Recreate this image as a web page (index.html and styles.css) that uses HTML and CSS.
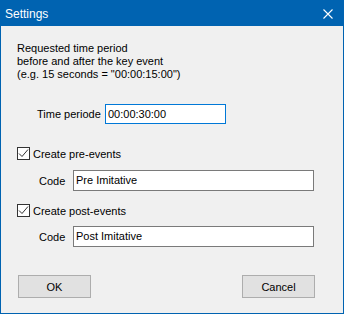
FILE: index.html
```html
<!DOCTYPE html>
<html lang="en">
<head>
    <meta charset="UTF-8">
    <title>Settings</title>
    <link rel="stylesheet" href="styles.css">
</head>
<body>
    <div class="window">
        <div class="titlebar">
            <span class="title">Settings</span>
            <span class="close">
                <svg width="10" height="10" viewBox="0 0 10 10">
                    <path d="M0.5 0.5 L9.5 9.5 M9.5 0.5 L0.5 9.5" stroke="#fff" stroke-width="1.1" fill="none"/>
                </svg>
            </span>
        </div>

        <div class="content">
            <p class="intro">
                Requested time period<br>
                before and after the key event<br>
                (e.g. 15 seconds = "00:00:15:00")
            </p>

            <div class="field-row time-row">
                <label class="time-label">Time periode</label>
                <div class="textbox focused">00:00:30:00</div>
            </div>

            <div class="check-row pre-check">
                <span class="checkbox">
                    <svg width="11" height="11" viewBox="0 0 11 11">
                        <path d="M1 5.5 L4 8.5 L10 1.5" stroke="#333" stroke-width="1" fill="none"/>
                    </svg>
                </span>
                <span>Create pre-events</span>
            </div>

            <div class="field-row code-row">
                <label class="code-label">Code</label>
                <div class="textbox wide">Pre Imitative</div>
            </div>

            <div class="check-row post-check">
                <span class="checkbox">
                    <svg width="11" height="11" viewBox="0 0 11 11">
                        <path d="M1 5.5 L4 8.5 L10 1.5" stroke="#333" stroke-width="1" fill="none"/>
                    </svg>
                </span>
                <span>Create post-events</span>
            </div>

            <div class="field-row code-row post-code">
                <label class="code-label">Code</label>
                <div class="textbox wide">Post Imitative</div>
            </div>

            <div class="buttons">
                <button class="btn">OK</button>
                <button class="btn">Cancel</button>
            </div>
        </div>
    </div>
</body>
</html>
```

FILE: styles.css
```css
* {
    margin: 0;
    padding: 0;
    box-sizing: border-box;
}

body {
    font-family: 'Liberation Sans', Arial, sans-serif;
    font-size: 11px;
    color: #000;
    background: #f0f0f0;
}

.window {
    width: 344px;
    height: 314px;
    border: 1px solid #0063b1;
    background: #f0f0f0;
    display: flex;
    flex-direction: column;
}

.titlebar {
    height: 25px;
    background: #0063b1;
    display: flex;
    align-items: center;
    justify-content: space-between;
    padding: 0 10px 0 4px;
}

.title {
    color: #fff;
    font-size: 12px;
    margin-top: 1px;
}

.close {
    display: flex;
    margin-top: 1px;
}

.content {
    padding: 16px 16px 0 16px;
    display: flex;
    flex-direction: column;
}

.intro {
    line-height: 13px;
}

.field-row {
    display: flex;
    align-items: center;
}

.time-row {
    margin-top: 23px;
    padding-left: 20px;
}

.time-label {
    width: 68px;
}

.code-row {
    margin-top: 10px;
    padding-left: 22px;
}

.post-code {
    margin-top: 9px;
}

.code-label {
    width: 34px;
}

.textbox {
    background: #fff;
    border: 1px solid #7a7a7a;
    height: 21px;
    line-height: 19px;
    padding-left: 2px;
}

.textbox.focused {
    border-color: #0078d7;
    width: 121px;
    height: 20px;
    line-height: 18px;
}

.textbox.wide {
    width: 241px;
}

.check-row {
    display: flex;
    align-items: center;
    gap: 3px;
    height: 13px;
}

.pre-check {
    margin-top: 23px;
}

.post-check {
    margin-top: 13px;
}

.checkbox {
    width: 13px;
    height: 13px;
    border: 1px solid #333;
    background: #fff;
    display: flex;
    align-items: center;
    justify-content: center;
}

.buttons {
    display: flex;
    justify-content: space-between;
    margin-top: 28px;
    padding: 0 12px 0 1px;
}

.btn {
    width: 73px;
    height: 23px;
    background: #e1e1e1;
    border: 1px solid #adadad;
    font-family: 'Liberation Sans', Arial, sans-serif;
    font-size: 11px;
    color: #000;
}
```
